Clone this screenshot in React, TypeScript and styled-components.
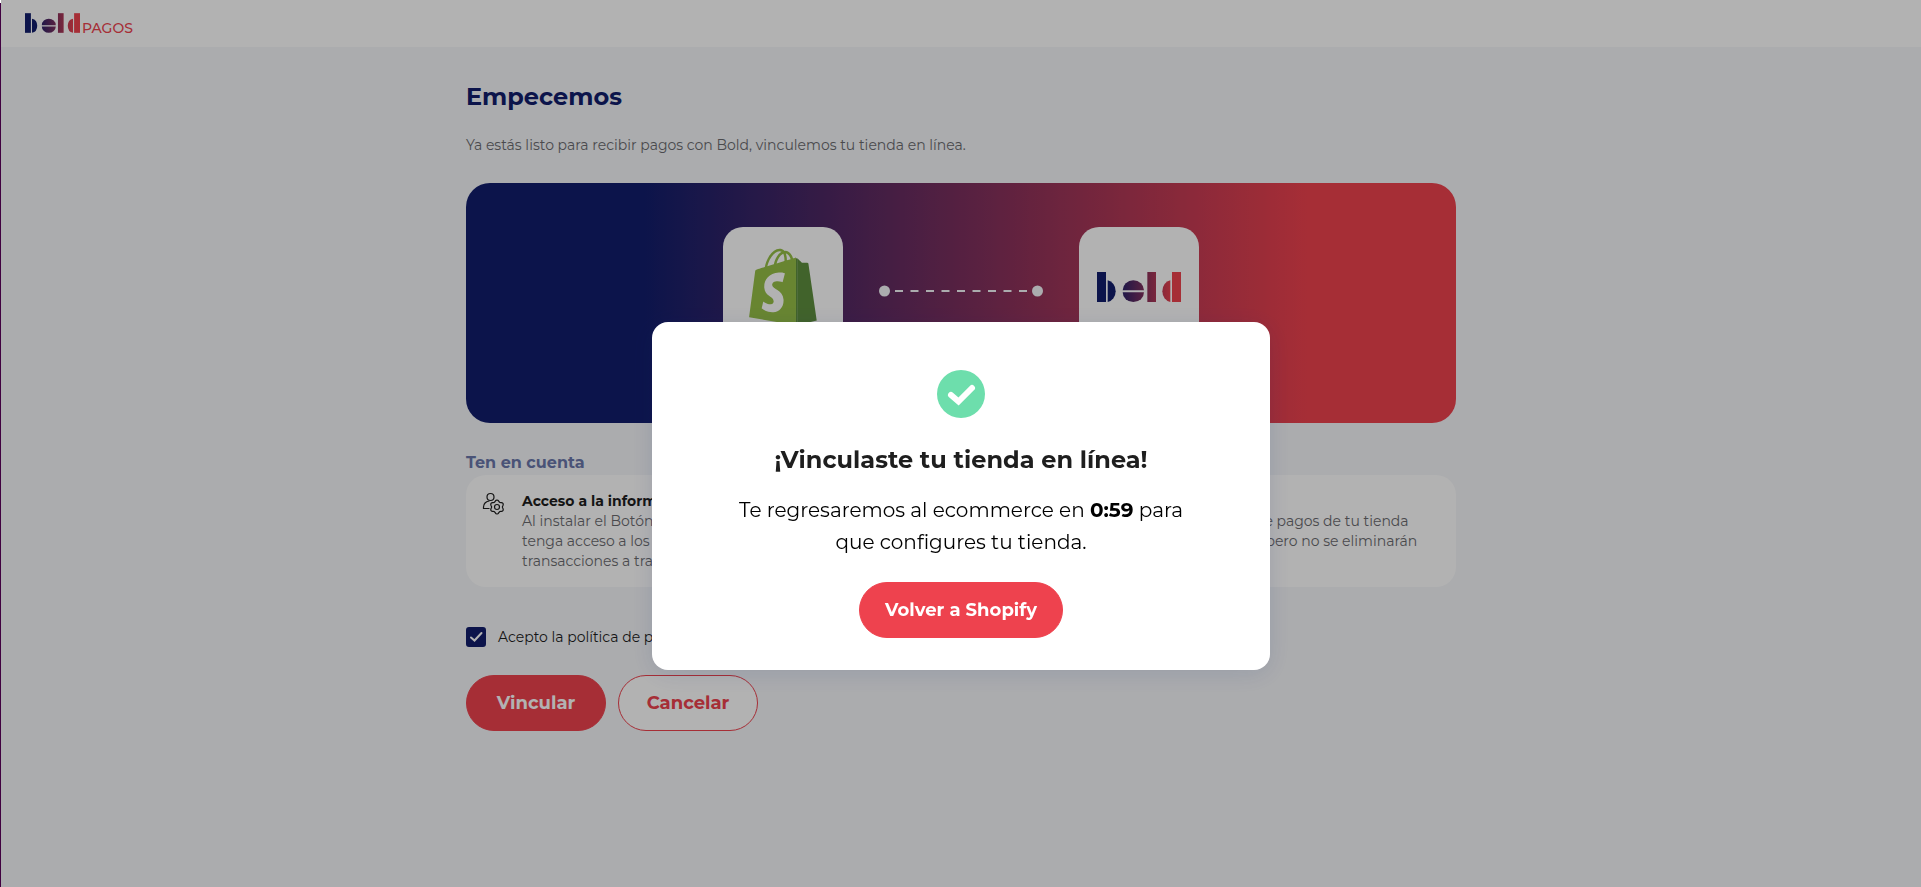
import React, { useId } from "react";
import styled, { createGlobalStyle, css } from "styled-components";
import { FaShopify } from "react-icons/fa";

const color = {
  navy: "#121e6c",
  coral: "#ee424e",
  page: "#f5f7fa",
  ink: "#1e1e1e",
  muted: "#6b6b6f",
  mint: "#6ddeac",
};

const GlobalStyle = createGlobalStyle`
  *, *::before, *::after { box-sizing: border-box; }
  body {
    margin: 0;
    background: ${color.page};
    color: ${color.ink};
    font-family: Montserrat, Inter, "Open Sans", sans-serif;
    font-size: 14px;
    line-height: 20px;
  }
  h1, h2, h3, p { margin: 0; }
`;

const Page = styled.div`
  min-height: 100vh;
  padding-left: 1px;
`;

const WindowEdge = styled.div`
  position: fixed;
  inset: 0 auto 0 0;
  width: 1px;
  z-index: 20;
  background: linear-gradient(#fff 3px, #400040 3px);
`;

const Header = styled.header`
  display: flex;
  align-items: flex-end;
  gap: 2px;
  height: 47px;
  padding: 0 24px 14px;
  background: #fff;
`;

const Product = styled.span`
  color: ${color.coral};
  font-weight: 500;
  line-height: 16px;
  margin-bottom: -3px;
`;

const Main = styled.main`
  width: 100%;
  max-width: 990px;
  margin: 0 auto;
  padding: 34px 0 40px;
`;

const Title = styled.h1`
  color: ${color.navy};
  font-size: 24px;
  line-height: 32px;
  font-weight: 700;
`;

const Lead = styled.p`
  margin-top: 22px;
  color: ${color.muted};
`;

const Banner = styled.section`
  display: flex;
  justify-content: center;
  align-items: flex-start;
  gap: 36px;
  height: 240px;
  margin-top: 28px;
  padding: 44px 0;
  border-radius: 24px;
  background: linear-gradient(90deg, ${color.navy} 18%, ${color.coral} 85%);
`;

const Tile = styled.div`
  display: flex;
  justify-content: center;
  align-items: center;
  width: 120px;
  height: 120px;
  border-radius: 20px;
  background: #fff;
`;

const Subtitle = styled.h2`
  margin-top: 28px;
  color: #6b78ab;
  font-size: 16px;
  line-height: 24px;
  font-weight: 700;
`;

const Notes = styled.section`
  display: grid;
  grid-template-columns: 1fr 1fr;
  column-gap: 6px;
  padding: 16px;
  border-radius: 20px;
  background: #fff;
`;

const Note = styled.article`
  display: flex;
  gap: 16px;
`;

const NoteText = styled.div`
  color: ${color.muted};
  white-space: nowrap;
`;

const NoteTitle = styled.h3`
  color: ${color.ink};
  font-size: 14px;
  line-height: 20px;
  font-weight: 700;
`;

const Consent = styled.label`
  display: flex;
  align-items: center;
  gap: 12px;
  margin-top: 40px;
`;

const CheckWrap = styled.span`
  display: grid;
  width: 20px;
  height: 20px;

  > * {
    grid-area: 1 / 1;
  }

  svg {
    pointer-events: none;
  }
`;

const Checkbox = styled.input`
  appearance: none;
  width: 20px;
  height: 20px;
  margin: 0;
  border: 2px solid ${color.navy};
  border-radius: 3px;

  &:checked {
    background: ${color.navy};
  }
`;

const Actions = styled.div`
  display: flex;
  gap: 12px;
  margin-top: 28px;
`;

const Button = styled.button<{ $outline?: boolean }>`
  min-width: 140px;
  height: 56px;
  padding: 0 25px;
  border: 1px solid ${color.coral};
  border-radius: 28px;
  background: ${color.coral};
  color: #fff;
  font: 700 18px/24px Montserrat, Inter, "Open Sans", sans-serif;
  cursor: pointer;

  ${(p) =>
    p.$outline &&
    css`
      background: #fff;
      color: ${color.coral};
    `}
`;

const Overlay = styled.div`
  position: fixed;
  inset: 0 0 0 1px;
  z-index: 10;
  display: flex;
  justify-content: center;
  align-items: center;
  padding: 105px 16px 0;
  background: rgba(0, 0, 0, 0.3);
`;

const Dialog = styled.div`
  display: flex;
  flex-direction: column;
  align-items: center;
  width: 100%;
  max-width: 618px;
  padding: 48px 72px 32px;
  border-radius: 16px;
  background: #fff;
  box-shadow: 0 4px 24px rgba(18, 30, 108, 0.12);
  text-align: center;
`;

const DialogTitle = styled.h2`
  margin-top: 26px;
  font-size: 24px;
  line-height: 32px;
  font-weight: 700;
`;

const DialogText = styled.p`
  margin: 18px 0 24px;
  color: #000;
  font-size: 20px;
  line-height: 32px;
`;

function BoldLogo({ width, height }: { width: number; height: number }) {
  const id = useId();
  return (
    <svg width={width} height={height} viewBox="0 0 252 90" role="img" aria-label="Bold">
      <defs>
        <linearGradient id={id} gradientUnits="userSpaceOnUse" x1="0" y1="0" x2="252" y2="0">
          <stop offset="0.22" stopColor={color.navy} />
          <stop offset="0.9" stopColor={color.coral} />
        </linearGradient>
      </defs>
      <g fill={`url(#${id})`}>
        <rect x="0" y="0" width="27" height="90" />
        <path d="M32 25a29 33 0 0 1 0 65z" />
        <path d="M77 55a32 30 0 0 1 64 0z" />
        <path d="M77 61a32 29 0 0 0 64 0z" />
        <rect x="151" y="0" width="26" height="90" />
        <path d="M220 25a29 33 0 0 0 0 65z" />
        <rect x="225" y="0" width="27" height="90" />
      </g>
    </svg>
  );
}

const Bag = styled.svg`
  svg path {
    fill: url(#bag-sides);
  }
`;

function ShopifyBag() {
  return (
    <Bag width="68" height="78" viewBox="4 8 440 496" role="img" aria-label="Shopify">
      <defs>
        <linearGradient id="bag-sides">
          <stop offset="0.7" stopColor="#95bf47" />
          <stop offset="0.7" stopColor="#5e8e3e" />
        </linearGradient>
      </defs>
      <polygon points="305,66 319,75 319,503 305,504" fill="#5e8e3e" />
      <FaShopify size={512} x={-32} />
    </Bag>
  );
}

function Connector() {
  return (
    <svg width="164" height="128" viewBox="0 0 164 128" aria-hidden="true">
      <g fill="#f5f7fa">
        <circle cx="5.500" cy="64" r="5.500" />
        <circle cx="158.500" cy="64" r="5.500" />
      </g>
      <path d="M16 64H149" stroke="#f5f7fa" strokeWidth="2" strokeDasharray="8 7.5" />
    </svg>
  );
}

function UserGearIcon() {
  const teeth = Array.from({ length: 48 }, (_, i) => {
    const a = (i / 48) * Math.PI * 2;
    const r = 6.2 + 0.8 * Math.cos(a * 6 + Math.PI);
    return `${(15 + r * Math.cos(a)).toFixed(2)},${(16 + r * Math.sin(a)).toFixed(2)}`;
  }).join(" ");
  return (
    <svg width="24" height="24" viewBox="0 0 24 24" fill="none" stroke="#1e1e1e" strokeWidth="1.2" aria-hidden="true">
      <circle cx="8.500" cy="6" r="3.500" />
      <path d="M7.500 17.500H1.500V16a6 6 0 0 1 6-6" />
      <polygon points={teeth} strokeLinejoin="round" />
      <circle cx="15" cy="16" r="2.500" />
    </svg>
  );
}

export default function App() {
  return (
    <Page>
      <GlobalStyle />
      <WindowEdge />
      <Header>
        <BoldLogo width={55} height={20} />
        <Product>PAGOS</Product>
      </Header>

      <Main>
        <Title>Empecemos</Title>
        <Lead>Ya estás listo para recibir pagos con Bold, vinculemos tu tienda en línea.</Lead>

        <Banner>
          <Tile>
            <ShopifyBag />
          </Tile>
          <Connector />
          <Tile>
            <BoldLogo width={84} height={30} />
          </Tile>
        </Banner>

        <Subtitle>Ten en cuenta</Subtitle>
        <Notes>
          <Note>
            <UserGearIcon />
            <NoteText>
              <NoteTitle>Acceso a la información</NoteTitle>
              Al instalar el Botón de pagos permites que Bold
              <br />
              tenga acceso a los datos de tu tienda y a las
              <br />
              transacciones a través del botón.
            </NoteText>
          </Note>
          <Note>
            <UserGearIcon />
            <NoteText>
              <NoteTitle>Desinstalación</NoteTitle>
              Al desinstalar, se eliminará el Botón de pagos de tu tienda
              <br />
              y no podrás recibir más pagos con él, pero no se eliminarán
              <br />
              tus datos.
            </NoteText>
          </Note>
        </Notes>

        <Consent>
          <CheckWrap>
            <Checkbox type="checkbox" defaultChecked />
            <svg width="20" height="20" viewBox="0 0 20 20" fill="none" aria-hidden="true">
              <path d="M5 10.500L8.500 13.500L15.500 6" stroke="#fff" strokeWidth="2" strokeLinecap="round" />
            </svg>
          </CheckWrap>
          Acepto la política de privacidad
        </Consent>

        <Actions>
          <Button type="button">Vincular</Button>
          <Button type="button" $outline>
            Cancelar
          </Button>
        </Actions>
      </Main>

      <Overlay>
        <Dialog role="dialog" aria-modal="true" aria-labelledby="dialog-title">
          <svg width="48" height="48" viewBox="0 0 48 48" fill="none" aria-hidden="true">
            <circle cx="24" cy="24" r="24" fill={color.mint} />
            <path d="M14 25L21.500 31.500L35 18" stroke="#fff" strokeWidth="6" strokeLinecap="round" />
          </svg>
          <DialogTitle id="dialog-title">¡Vinculaste tu tienda en línea!</DialogTitle>
          <DialogText>
            Te regresaremos al ecommerce en <strong>0:59</strong> para que configures tu tienda.
          </DialogText>
          <Button type="button">Volver a Shopify</Button>
        </Dialog>
      </Overlay>
    </Page>
  );
}
